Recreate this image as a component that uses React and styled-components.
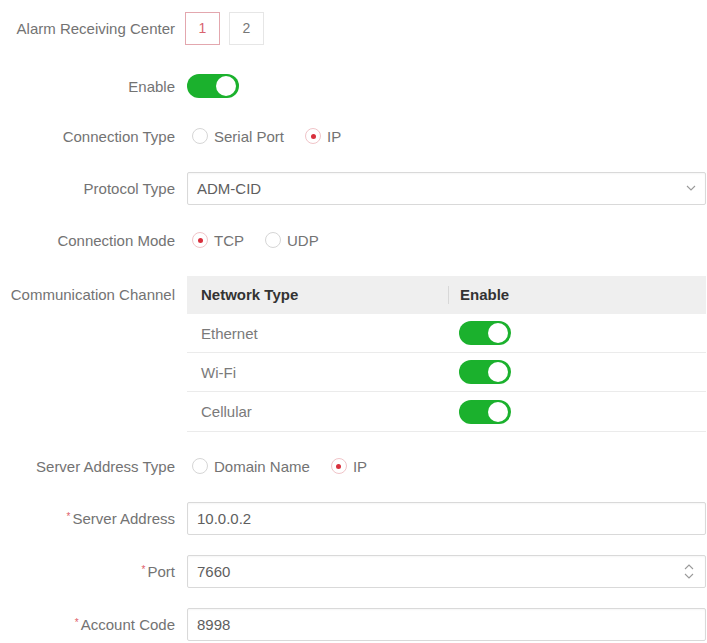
import React from 'react'
import styled, { createGlobalStyle } from 'styled-components'

const GlobalStyle = createGlobalStyle`
    body {
        margin: 0;
        background: #fff;
        font-family: "Liberation Sans", Arial, sans-serif;
    }
`

const channels = ['Ethernet', 'Wi-Fi', 'Cellular']

function Radio({ checked, label }) {
    return (
        <RadioItem>
            <RadioCircle $checked={checked} />
            <span>{label}</span>
        </RadioItem>
    )
}

function Toggle() {
    return (
        <Switch>
            <Knob />
        </Switch>
    )
}

function Chevron({ up }) {
    return (
        <svg width="10" height="6" viewBox="0 0 10 6">
            <path
                d={up ? 'M1 5L5 1L9 5' : 'M1 1L5 5L9 1'}
                fill="none"
                stroke="#9a9a9a"
                strokeWidth="1.1"
            />
        </svg>
    )
}

function App() {
    return (
        <>
            <GlobalStyle />
            <Form>
                <Row $top={11}>
                    <Label>Alarm Receiving Center</Label>
                    <Tabs>
                        <Tab $active>1</Tab>
                        <Tab>2</Tab>
                    </Tabs>
                </Row>
                <Row $top={24}>
                    <Label>Enable</Label>
                    <Toggle />
                </Row>
                <Row $top={16}>
                    <Label>Connection Type</Label>
                    <RadioGroup>
                        <Radio label="Serial Port" />
                        <Radio checked label="IP" />
                    </RadioGroup>
                </Row>
                <Row $top={18}>
                    <Label>Protocol Type</Label>
                    <Field>
                        <span>ADM-CID</span>
                        <Chevron />
                    </Field>
                </Row>
                <Row $top={18}>
                    <Label>Connection Mode</Label>
                    <RadioGroup>
                        <Radio checked label="TCP" />
                        <Radio label="UDP" />
                    </RadioGroup>
                </Row>
                <TableRow $top={19}>
                    <Label>Communication Channel</Label>
                    <Table>
                        <HeadRow>
                            <HeadCell>Network Type</HeadCell>
                            <HeadCell $divider>Enable</HeadCell>
                        </HeadRow>
                        {channels.map((name, i) => (
                            <BodyRow key={name} $last={i === channels.length - 1}>
                                <Cell>{name}</Cell>
                                <Cell $second>
                                    <Toggle />
                                </Cell>
                            </BodyRow>
                        ))}
                    </Table>
                </TableRow>
                <Row $top={17}>
                    <Label>Server Address Type</Label>
                    <RadioGroup>
                        <Radio label="Domain Name" />
                        <Radio checked label="IP" />
                    </RadioGroup>
                </Row>
                <Row $top={18}>
                    <Label $required>Server Address</Label>
                    <Field>
                        <span>10.0.0.2</span>
                    </Field>
                </Row>
                <Row $top={19}>
                    <Label $required>Port</Label>
                    <Field>
                        <span>7660</span>
                        <Spinner>
                            <Chevron up />
                            <Chevron />
                        </Spinner>
                    </Field>
                </Row>
                <Row $top={19}>
                    <Label $required>Account Code</Label>
                    <Field>
                        <span>8998</span>
                    </Field>
                </Row>
            </Form>
        </>
    )
}

const Form = styled.div`
    display: flex;
    flex-direction: column;
    padding-right: 1px;
    width: 707px;
    box-sizing: border-box;
`

const Row = styled.div`
    display: grid;
    grid-template-columns: 175px 1fr;
    column-gap: 12px;
    align-items: center;
    height: 34px;
    margin-top: ${(p) => p.$top || 0}px;
`

const TableRow = styled(Row)`
    height: auto;
    align-items: start;
    >span{
        line-height: 38px;
    }
`

const Label = styled.span`
    text-align: right;
    font-size: 15px;
    color: #737373;
    white-space: nowrap;
    &::before{
        content: ${(p) => (p.$required ? '"*"' : 'none')};
        color: #e0606a;
        font-size: 10px;
        vertical-align: 4px;
        margin-right: 2px;
    }
`

const Tabs = styled.div`
    display: flex;
    gap: 9px;
    margin-left: -2px;
`

const Tab = styled.div`
    width: 35px;
    height: 33px;
    display: flex;
    align-items: center;
    justify-content: center;
    font-size: 14px;
    box-sizing: border-box;
    border: 1px solid ${(p) => (p.$active ? '#e3a7ae' : '#e6e6e6')};
    color: ${(p) => (p.$active ? '#d9636f' : '#777')};
`

const Switch = styled.div`
    width: 52px;
    height: 24px;
    border-radius: 12px;
    background: #1bb12d;
    display: flex;
    align-items: center;
    justify-content: flex-end;
    padding-right: 3px;
    box-sizing: border-box;
`

const Knob = styled.div`
    width: 20px;
    height: 20px;
    border-radius: 50%;
    background: #fff;
`

const RadioGroup = styled.div`
    display: flex;
    align-items: center;
    gap: 21px;
    padding-left: 5px;
`

const RadioItem = styled.label`
    display: flex;
    align-items: center;
    gap: 6px;
    font-size: 15px;
    color: #737373;
`

const RadioCircle = styled.span`
    width: 16px;
    height: 16px;
    border-radius: 50%;
    box-sizing: border-box;
    border: 1px solid ${(p) => (p.$checked ? '#f0c4c8' : '#d6d6d6')};
    display: flex;
    align-items: center;
    justify-content: center;
    &::after{
        content: '';
        display: ${(p) => (p.$checked ? 'block' : 'none')};
        width: 5px;
        height: 5px;
        border-radius: 50%;
        background: #d8303d;
    }
`

const Field = styled.div`
    height: 33px;
    box-sizing: border-box;
    border: 1px solid #d9d9d9;
    border-radius: 2px;
    box-shadow: inset 0 1px 2px rgba(0, 0, 0, 0.04);
    display: flex;
    align-items: center;
    justify-content: space-between;
    padding: 0 9px 0 9px;
    font-size: 15px;
    color: #5e5e5e;
`

const Spinner = styled.div`
    display: flex;
    flex-direction: column;
    gap: 3px;
    margin-right: 2px;
`

const Table = styled.div`
    display: flex;
    flex-direction: column;
`

const HeadRow = styled.div`
    display: grid;
    grid-template-columns: 261px 1fr;
    height: 38px;
    background: #efefef;
    align-items: center;
`

const HeadCell = styled.div`
    font-size: 15px;
    font-weight: bold;
    color: #333;
    padding-left: ${(p) => (p.$divider ? '11px' : '14px')};
    border-left: ${(p) => (p.$divider ? '1px solid #d8d8d8' : 'none')};
    line-height: 18px;
`

const BodyRow = styled.div`
    display: grid;
    grid-template-columns: 261px 1fr;
    height: ${(p) => (p.$last ? 40 : 39)}px;
    align-items: center;
    border-bottom: 1px solid #ebebeb;
    box-sizing: border-box;
`

const Cell = styled.div`
    font-size: 15px;
    color: #7a7a7a;
    padding-left: ${(p) => (p.$second ? '11px' : '14px')};
    display: flex;
    align-items: center;
`

export default App
